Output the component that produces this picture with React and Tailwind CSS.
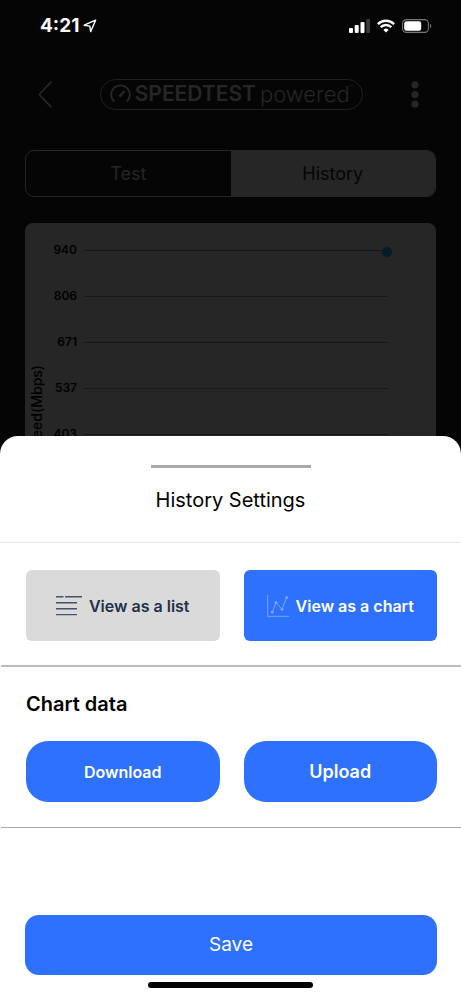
import React, { useState } from 'react';

const SPEED_TICKS = [940, 806, 671, 537, 403];

function StatusBar() {
  return (
    <div className="flex h-[52px] items-center justify-between pl-10 pr-[29px] text-white">
      <div className="flex items-center gap-1">
        <span className="text-[19px] font-bold leading-6">4:21</span>
        <svg className="h-[14px] w-[14px]" viewBox="0 0 14 14" fill="none" stroke="currentColor" strokeWidth="1.4" strokeLinejoin="round">
          <path d="M12.6 1.2 1.2 6.2l5.6.9.9 5.5z" />
        </svg>
      </div>
      <div className="flex items-center gap-[7px]">
        <svg className="h-[14px] w-[21px]" viewBox="0 0 21 14" fill="currentColor">
          <rect x="0" y="9" width="4" height="5" rx="1" />
          <rect x="5.7" y="6" width="4" height="8" rx="1" />
          <rect x="11.5" y="3" width="4" height="11" rx="1" />
          <rect x="17.2" y="0" width="4" height="14" rx="1" fill="#3a3a3a" />
        </svg>
        <svg className="h-[14px] w-[18px]" viewBox="0 0 18 14" fill="none" stroke="currentColor" strokeWidth="2.4">
          <path d="M.9 5.1a11.6 11.6 0 0 1 16.2 0" />
          <path d="M3.7 8.2a7.5 7.5 0 0 1 10.6 0" />
          <path d="m9 13.6-2.6-2.7a3.7 3.7 0 0 1 5.2 0z" fill="currentColor" stroke="none" />
        </svg>
        <svg className="h-[14px] w-[30px]" viewBox="0 0 30 14" fill="none">
          <rect x=".6" y=".6" width="25.8" height="12.8" rx="3.8" stroke="#777" strokeWidth="1.1" />
          <rect x="2.2" y="2.2" width="17" height="9.6" rx="2.2" fill="currentColor" />
          <path d="M28 4.8c1.6.6 1.6 3.8 0 4.4z" fill="#777" />
        </svg>
      </div>
    </div>
  );
}

function Header() {
  return (
    <header className="flex h-[84px] items-center justify-between pl-[38px] pr-[42px] text-[#262626]">
      <button type="button" aria-label="Back">
        <svg className="h-[27px] w-[14px]" viewBox="0 0 14 27" fill="none" stroke="currentColor" strokeWidth="1.8" strokeLinecap="round" strokeLinejoin="round">
          <path d="M13 1.2 1.2 13.5 13 25.8" />
        </svg>
      </button>
      <div className="flex h-[31px] items-center rounded-full border border-[#202020] px-[9px]">
        <svg className="mr-1 h-5 w-[21px]" viewBox="0 0 21 20" fill="none" stroke="currentColor" strokeWidth="1.9">
          <path d="M4.3 17.6a9.3 9.3 0 1 1 12.4 0" />
          <path d="m9.3 12.6 5.4-5.6" strokeWidth="2.4" />
        </svg>
        <span className="text-[21px] font-semibold leading-6">SPEEDTEST</span>
        <span className="ml-1 text-[22px] font-light leading-6">powered</span>
        <span className="self-start text-[6px] leading-4">™</span>
      </div>
      <button type="button" aria-label="More options">
        <svg className="h-[27px] w-2" viewBox="0 0 8 27" fill="currentColor">
          <circle cx="4" cy="3.8" r="3.6" />
          <circle cx="4" cy="13.5" r="3.6" />
          <circle cx="4" cy="23.2" r="3.6" />
        </svg>
      </button>
    </header>
  );
}

function SpeedChart() {
  return (
    <section className="flex grow rounded-t-lg bg-[#262626] pr-12 pt-1 text-black">
      <div className="w-6 shrink-0 pl-1 pt-[138px]">
        <span className="rotate-180 whitespace-nowrap text-sm font-medium leading-4 [writing-mode:vertical-rl]">Speed(Mbps)</span>
      </div>
      <div className="grow">
        {SPEED_TICKS.map((tick, i) => (
          <div key={tick} className="flex h-[46px] items-center gap-[7px]">
            <span className="w-7 text-right text-xs font-semibold">{tick}</span>
            <div className="relative h-px grow bg-[#171717]">
              {i === 0 && (
                <span className="absolute -right-1 -top-[3px] h-[10px] w-[10px] rounded-full bg-[#021c28]" />
              )}
            </div>
          </div>
        ))}
      </div>
    </section>
  );
}

function ListIcon() {
  return (
    <svg className="h-5 w-[26px]" viewBox="0 0 26 20" fill="none" stroke="#43536b" strokeWidth="1.4">
      <path d="M0 .7h7.5M9 .7h17M0 6.7h21M0 12.7h21M0 18.6h21" />
    </svg>
  );
}

function ChartIcon() {
  return (
    <svg className="h-[22px] w-[22px]" viewBox="0 0 22 22" fill="none" stroke="#7ba4ff" strokeWidth="1">
      <path d="M.7 0v21.3H22" />
      <path d="M5.3 17 9 7.5l6 6.8L19.7 2.5" />
      <g fill="#7ba4ff" stroke="none">
        <circle cx="5.3" cy="17" r="1.5" />
        <circle cx="9" cy="7.5" r="1.5" />
        <circle cx="15" cy="14.3" r="1.5" />
        <circle cx="19.7" cy="2.5" r="1.5" />
      </g>
    </svg>
  );
}

function HistorySettings() {
  const [view, setView] = useState('chart');
  const [series, setSeries] = useState({ download: true, upload: true });

  const toggle = (name) => setSeries((prev) => ({ ...prev, [name]: !prev[name] }));

  const active = 'bg-[#2e71ff] text-white';
  const inactive = 'bg-[#dadada] text-[#22304a]';

  return (
    <div role="dialog" aria-labelledby="settings-title" className="fixed inset-x-0 bottom-0 rounded-t-[18px] bg-white pt-[29px]">
      <div className="mx-auto h-[3px] w-40 bg-[#a9a9a9]" />
      <h2 id="settings-title" className="pb-7 pt-[18px] text-center text-xl leading-7 text-black">
        History Settings
      </h2>

      <div className="flex gap-6 border-t border-[#e6e6e6] pb-6 pl-[26px] pr-6 pt-[27px]">
        <button
          type="button"
          onClick={() => setView('list')}
          className={`flex h-[71px] flex-1 items-center justify-center gap-[7px] rounded-md font-semibold ${view === 'list' ? active : inactive}`}
        >
          <ListIcon />
          View as a list
        </button>
        <button
          type="button"
          onClick={() => setView('chart')}
          className={`flex h-[71px] flex-1 items-center justify-center gap-[7px] rounded-md font-semibold ${view === 'chart' ? active : inactive}`}
        >
          <ChartIcon />
          View as a chart
        </button>
      </div>

      <div className="ml-px border-b border-t-2 border-b-[#a9a9a9] border-t-[#bcbcbc] pb-[25px] pl-[25px] pr-6 pt-[23px]">
        <h3 className="text-xl font-semibold leading-7 text-black">Chart data</h3>
        <div className="mt-[23px] flex gap-6">
          <button
            type="button"
            onClick={() => toggle('download')}
            className={`h-[61px] flex-1 rounded-[22px] text-base font-semibold ${series.download ? active : inactive}`}
          >
            Download
          </button>
          <button
            type="button"
            onClick={() => toggle('upload')}
            className={`h-[61px] flex-1 rounded-[22px] text-lg font-semibold ${series.upload ? active : inactive}`}
          >
            Upload
          </button>
        </div>
      </div>

      <div className="pl-[25px] pr-6 pt-[87px]">
        <button type="button" className="h-[60px] w-full rounded-[14px] bg-[#2e71ff] text-[19px] text-white">
          Save
        </button>
      </div>
      <div className="mx-auto mb-[10px] mt-[7px] h-[6px] w-[165px] rounded-full bg-black" />
    </div>
  );
}

function App() {
  return (
    <div className="flex h-screen flex-col overflow-hidden bg-[#050505] font-['Inter',sans-serif]">
      <StatusBar />
      <Header />
      <main className="flex grow flex-col gap-[26px] px-[25px] pt-[14px]">
        <div className="flex h-[47px] shrink-0 overflow-hidden rounded-[9px] border border-[#262626] text-lg">
          <button type="button" className="flex-1 text-[#262626]">Test</button>
          <button type="button" className="flex-1 bg-[#262626] text-[#050505]">History</button>
        </div>
        <SpeedChart />
      </main>
      <HistorySettings />
    </div>
  );
}

export default App;
